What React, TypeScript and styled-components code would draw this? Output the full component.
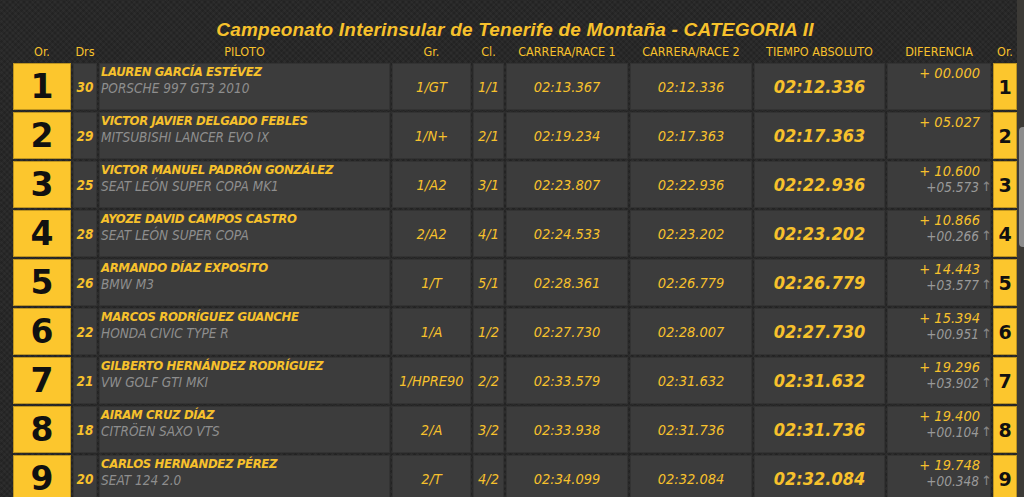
import styled, { createGlobalStyle } from 'styled-components';

const YELLOW = '#fcc62d';
const TEXT_YELLOW = '#f7c12c';
const CELL = '#3c3c3c';
const NARROW = '"DejaVu Sans Condensed", "Liberation Sans", sans-serif';
const COLS = '58px 24px 291px 79px 31px 122px 122px 131px 104px 24px';

const GlobalStyle = createGlobalStyle`
  html, body {
    margin: 0;
    height: 497px;
    overflow: hidden;
    background-color: #282828;
    background-image:
      repeating-linear-gradient(45deg, rgba(255,255,255,0.025) 0 2px, transparent 2px 4px),
      repeating-linear-gradient(-45deg, rgba(0,0,0,0.12) 0 2px, transparent 2px 4px);
    font-family: ${NARROW};
  }
`;

const Page = styled.div`
  display: flex;
  height: 497px;
  overflow: hidden;
`;

const Main = styled.div`
  flex: 1;
  padding-left: 13px;
  display: flex;
  flex-direction: column;
  overflow: hidden;

  & > * {
    flex-shrink: 0;
  }
`;

const Title = styled.h1`
  margin: 0;
  padding-top: 19px;
  font-family: "Liberation Sans", sans-serif;
  font-size: 19px;
  line-height: 22px;
  font-weight: bold;
  font-style: italic;
  color: ${TEXT_YELLOW};
  text-align: center;
  letter-spacing: 0.2px;
`;

const HeaderRow = styled.div`
  display: grid;
  grid-template-columns: ${COLS};
  column-gap: 2px;
  height: 20px;
  margin-bottom: 2px;
  align-items: center;
`;

const HeadCell = styled.div`
  color: ${TEXT_YELLOW};
  font-size: 12.5px;
  text-align: center;
  white-space: nowrap;
`;

const Row = styled.div`
  display: grid;
  grid-template-columns: ${COLS};
  column-gap: 2px;
  height: 47px;
  margin-bottom: 2px;
`;

const PosBox = styled.div<{ $small?: boolean }>`
  background: ${YELLOW};
  color: #111;
  font-family: "DejaVu Sans", sans-serif;
  font-weight: bold;
  font-size: ${(p) => (p.$small ? '19px' : '33px')};
  display: flex;
  align-items: center;
  justify-content: center;
  box-shadow: inset 0 0 0 1px rgba(0,0,0,0.25);
`;

const Cell = styled.div<{ $align?: 'left' | 'center' | 'right' }>`
  background: ${CELL};
  color: ${TEXT_YELLOW};
  font-style: italic;
  font-size: 14.5px;
  display: flex;
  flex-direction: column;
  justify-content: ${(p) => (p.$align === 'center' ? 'center' : 'flex-start')};
  align-items: ${(p) => (p.$align === 'left' ? 'flex-start' : p.$align === 'right' ? 'flex-end' : 'center')};
  box-shadow: inset 0 0 0 1px #333;
  white-space: nowrap;
  overflow: hidden;
`;

const PilotCell = styled(Cell)`
  padding: 1px 0 0 2px;
`;

const Name = styled.div`
  font-weight: bold;
  font-size: 13px;
  letter-spacing: -0.35px;
  line-height: 16px;
`;

const Car = styled.div`
  color: #8e8e8e;
  font-size: 13.5px;
  line-height: 16px;
`;

const Drs = styled(Cell)`
  font-weight: bold;
  font-size: 13.5px;
`;

const BigTime = styled(Cell)`
  font-weight: bold;
  font-size: 18px;
`;

const DifCell = styled(Cell)`
  padding: 2px 2px 0 0;
  line-height: 16px;
`;

const DifMain = styled.div`
  padding-right: 9px;
`;

const DifSub = styled.div`
  color: #999;
  font-size: 13.5px;
  display: flex;
  align-items: center;
`;

const Arrow = styled.span`
  color: #888;
  font-style: normal;
  font-family: "DejaVu Sans", sans-serif;
  font-size: 13px;
  width: 8px;
  margin-left: 2px;
`;

const ScrollTrack = styled.div`
  width: 7px;
  background: #3c3a36;
  display: flex;
  flex-direction: column;
`;

const ScrollThumb = styled.div`
  margin-top: 127px;
  margin-left: 2px;
  height: 120px;
  background: #8c8c8c;
  border-radius: 4px 0 0 4px;
`;

type Result = {
  dorsal: string;
  name: string;
  car: string;
  group: string;
  cls: string;
  race1: string;
  race2: string;
  total: string;
  diff: string;
  prev?: string;
};

const results: Result[] = [
  { dorsal: '30', name: 'LAUREN GARCÍA ESTÉVEZ', car: 'PORSCHE 997 GT3 2010', group: '1/GT', cls: '1/1', race1: '02:13.367', race2: '02:12.336', total: '02:12.336', diff: '+ 00.000' },
  { dorsal: '29', name: 'VICTOR JAVIER DELGADO FEBLES', car: 'MITSUBISHI LANCER EVO IX', group: '1/N+', cls: '2/1', race1: '02:19.234', race2: '02:17.363', total: '02:17.363', diff: '+ 05.027' },
  { dorsal: '25', name: 'VICTOR MANUEL PADRÓN GONZÁLEZ', car: 'SEAT LEÓN SUPER COPA MK1', group: '1/A2', cls: '3/1', race1: '02:23.807', race2: '02:22.936', total: '02:22.936', diff: '+ 10.600', prev: '+05.573' },
  { dorsal: '28', name: 'AYOZE DAVID CAMPOS CASTRO', car: 'SEAT LEÓN SUPER COPA', group: '2/A2', cls: '4/1', race1: '02:24.533', race2: '02:23.202', total: '02:23.202', diff: '+ 10.866', prev: '+00.266' },
  { dorsal: '26', name: 'ARMANDO DÍAZ EXPOSITO', car: 'BMW M3', group: '1/T', cls: '5/1', race1: '02:28.361', race2: '02:26.779', total: '02:26.779', diff: '+ 14.443', prev: '+03.577' },
  { dorsal: '22', name: 'MARCOS RODRÍGUEZ GUANCHE', car: 'HONDA CIVIC TYPE R', group: '1/A', cls: '1/2', race1: '02:27.730', race2: '02:28.007', total: '02:27.730', diff: '+ 15.394', prev: '+00.951' },
  { dorsal: '21', name: 'GILBERTO HERNÁNDEZ RODRÍGUEZ', car: 'VW GOLF GTI MKI', group: '1/HPRE90', cls: '2/2', race1: '02:33.579', race2: '02:31.632', total: '02:31.632', diff: '+ 19.296', prev: '+03.902' },
  { dorsal: '18', name: 'AIRAM CRUZ DÍAZ', car: 'CITRÖEN SAXO VTS', group: '2/A', cls: '3/2', race1: '02:33.938', race2: '02:31.736', total: '02:31.736', diff: '+ 19.400', prev: '+00.104' },
  { dorsal: '20', name: 'CARLOS HERNANDEZ PÉREZ', car: 'SEAT 124 2.0', group: '2/T', cls: '4/2', race1: '02:34.099', race2: '02:32.084', total: '02:32.084', diff: '+ 19.748', prev: '+00.348' },
];

const headers = ['Or.', 'Drs', 'PILOTO', 'Gr.', 'Cl.', 'CARRERA/RACE 1', 'CARRERA/RACE 2', 'TIEMPO ABSOLUTO', 'DIFERENCIA', 'Or.'];

export default function App() {
  return (
    <>
      <GlobalStyle />
      <Page>
        <Main>
          <Title>Campeonato Interinsular de Tenerife de Montaña - CATEGORIA II</Title>
          <HeaderRow>
            {headers.map((h, i) => (
              <HeadCell key={i}>{h}</HeadCell>
            ))}
          </HeaderRow>
          {results.map((r, i) => (
            <Row key={r.dorsal}>
              <PosBox>{i + 1}</PosBox>
              <Drs $align="center">{r.dorsal}</Drs>
              <PilotCell $align="left">
                <Name>{r.name}</Name>
                <Car>{r.car}</Car>
              </PilotCell>
              <Cell $align="center">{r.group}</Cell>
              <Cell $align="center">{r.cls}</Cell>
              <Cell $align="center">{r.race1}</Cell>
              <Cell $align="center">{r.race2}</Cell>
              <BigTime $align="center">{r.total}</BigTime>
              <DifCell $align="right">
                <DifMain>{r.diff}</DifMain>
                {r.prev && (
                  <DifSub>
                    {r.prev}
                    <Arrow>↑</Arrow>
                  </DifSub>
                )}
              </DifCell>
              <PosBox $small>{i + 1}</PosBox>
            </Row>
          ))}
        </Main>
        <ScrollTrack>
          <ScrollThumb />
        </ScrollTrack>
      </Page>
    </>
  );
}
